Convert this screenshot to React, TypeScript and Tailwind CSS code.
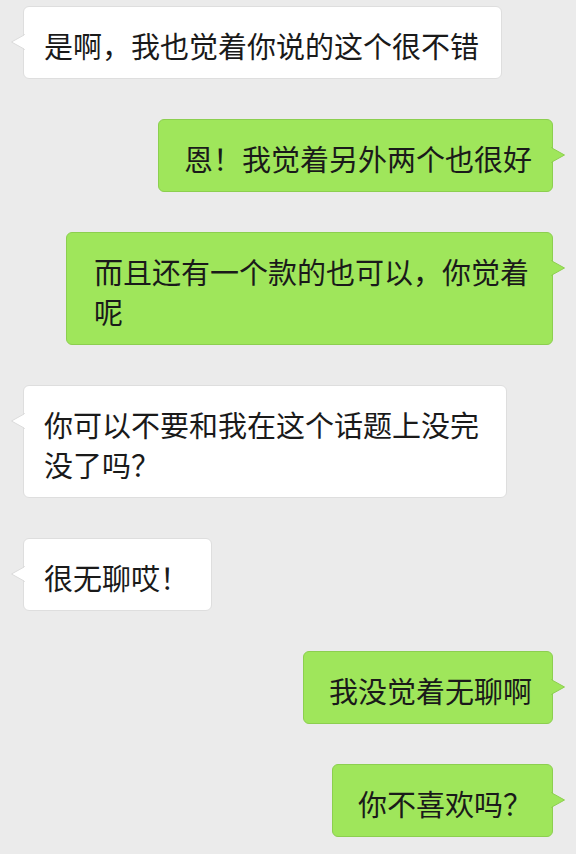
import type { ReactNode } from "react";

type Side = "left" | "right";

const messages: { side: Side; text: string; box?: string }[] = [
  { side: "left", text: "是啊，我也觉着你说的这个很不错" },
  { side: "right", text: "恩！我觉着另外两个也很好" },
  { side: "right", text: "而且还有一个款的也可以，你觉着呢", box: "w-[487px] pl-[27px]" },
  { side: "left", text: "你可以不要和我在这个话题上没完没了吗？", box: "w-[484px]" },
  { side: "left", text: "很无聊哎！" },
  { side: "right", text: "我没觉着无聊啊" },
  { side: "right", text: "你不喜欢吗？" },
];

// little arrow on the side of each bubble
function Tail({ side }: { side: Side }) {
  if (side === "left") {
    return (
      <svg className="absolute -left-[14px] top-[27px]" width="15" height="16" viewBox="0 0 15 16">
        <path d="M15 0.5 L1.5 8 L15 15.5" fill="#ffffff" stroke="#dcdcdc" strokeWidth="1" />
        <rect x="14" y="1" width="2" height="14" fill="#ffffff" />
      </svg>
    );
  }
  return (
    <svg className="absolute -right-[14px] top-[27px]" width="15" height="16" viewBox="0 0 15 16">
      <path d="M0 0.5 L13.5 8 L0 15.5" fill="#9fe65b" stroke="#8ccf4f" strokeWidth="1" />
      <rect x="-1" y="1" width="2" height="14" fill="#9fe65b" />
    </svg>
  );
}

function Bubble({ side, box, children }: { side: Side; box?: string; children: ReactNode }) {
  const tone =
    side === "left"
      ? "bg-white border-[#dedede] pl-[20px] pr-[22px]"
      : "bg-[#9fe65b] border-[#8ccf4f] pl-[25px] pr-[20px]";
  return (
    <div className={`relative rounded-[6px] border pt-[18px] pb-[13px] text-[29px] leading-[40px] text-[#1a1a1a] ${tone} ${box ?? ""}`}>
      <Tail side={side} />
      {children}
    </div>
  );
}

export default function App() {
  return (
    <div
      className="w-[576px] h-[854px] overflow-hidden bg-[#ebebeb] pt-[6px] flex flex-col gap-[40px]"
      style={{ fontFamily: '"Noto Sans CJK SC", "Noto Sans", sans-serif' }}
    >
      {messages.map((m, i) => (
        <div key={i} className={m.side === "left" ? "flex justify-start pl-[23px]" : "flex justify-end pr-[23px]"}>
          <Bubble side={m.side} box={m.box}>
            {m.text}
          </Bubble>
        </div>
      ))}
    </div>
  );
}
